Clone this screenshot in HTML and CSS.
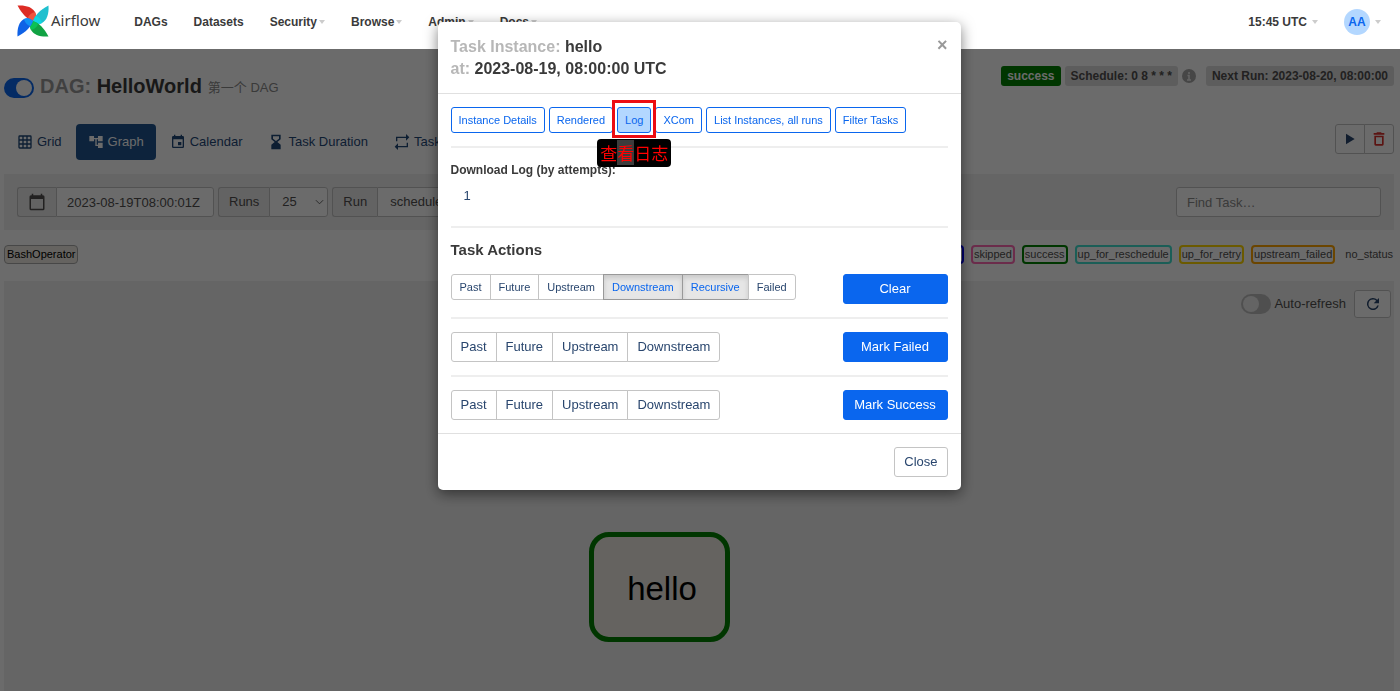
FILE: index.html
```
<!DOCTYPE html>
<html lang="en">
<head>
<meta charset="utf-8">
<title>HelloWorld - Graph - Airflow</title>
<link rel="stylesheet" href="styles.css">
</head>
<body>
<header class="navbar">
  <a class="brand" href="#">
    <svg class="brand-mark" viewBox="0 0 32 32" aria-hidden="true">
      <g>
        <path fill="#dd2c24" d="M0.500 0.500C9 0 15 2 18 7C20 11 18 14 16 16C10 14 5 9 0.500 0.500Z"/>
        <path fill="#f0553f" d="M16 16C18 14 20 11 18 7C14 8 11 11 11 13.500Z"/>
      </g>
      <g transform="rotate(90 16 16)">
        <path fill="#1fc0cf" d="M0.500 0.500C9 0 15 2 18 7C20 11 18 14 16 16C10 14 5 9 0.500 0.500Z"/>
        <path fill="#10d5e2" d="M16 16C18 14 20 11 18 7C14 8 11 11 11 13.500Z"/>
      </g>
      <g transform="rotate(180 16 16)">
        <path fill="#11a243" d="M0.500 0.500C9 0 15 2 18 7C20 11 18 14 16 16C10 14 5 9 0.500 0.500Z"/>
        <path fill="#0bc255" d="M16 16C18 14 20 11 18 7C14 8 11 11 11 13.500Z"/>
      </g>
      <g transform="rotate(270 16 16)">
        <path fill="#0f62e6" d="M0.500 0.500C9 0 15 2 18 7C20 11 18 14 16 16C10 14 5 9 0.500 0.500Z"/>
        <path fill="#1191f5" d="M16 16C18 14 20 11 18 7C14 8 11 11 11 13.500Z"/>
      </g>
    </svg>
    <span>Airflow</span>
  </a>
  <nav class="menu">
    <a href="#">DAGs</a>
    <a href="#">Datasets</a>
    <a class="has-caret" href="#">Security</a>
    <a class="has-caret" href="#">Browse</a>
    <a class="has-caret" href="#">Admin</a>
    <a class="has-caret" href="#">Docs</a>
  </nav>
  <div class="session">
    <a class="has-caret" href="#">15:45 UTC</a>
    <a class="has-caret" href="#"><span class="avatar">AA</span></a>
  </div>
</header>

<main class="page">
  <div class="dag-head">
    <label class="switch"><input type="checkbox" checked aria-label="Pause or unpause the DAG"></label>
    <h1><span class="muted">DAG:</span> HelloWorld</h1>
    <span class="description">第一个 DAG</span>
    <div class="tags">
      <a class="tag tag-success" href="#">success</a>
      <a class="tag" href="#">Schedule: 0 8 * * *</a>
      <svg class="info" viewBox="0 0 14 14" aria-hidden="true"><circle cx="7" cy="7" r="7"/><path d="M7 3v2M5.500 6.500H7V11M5 11h4"/></svg>
      <span class="tag">Next Run: 2023-08-20, 08:00:00</span>
    </div>
  </div>

  <div class="tabs-row">
    <nav class="tabs">
      <a href="#"><svg class="icon" viewBox="0 0 24 24"><path d="M20 2H4a2 2 0 0 0-2 2v16a2 2 0 0 0 2 2h16a2 2 0 0 0 2-2V4a2 2 0 0 0-2-2zM8 20H4v-4h4zm0-6H4v-4h4zm0-6H4V4h4zm6 12h-4v-4h4zm0-6h-4v-4h4zm0-6h-4V4h4zm6 12h-4v-4h4zm0-6h-4v-4h4zm0-6h-4V4h4z"/></svg>Grid</a>
      <a class="active" href="#"><svg class="icon" viewBox="0 0 24 24"><path d="M22 11V3h-7v3H9V3H2v8h7V8h2v10h4v3h7v-8h-7v3h-2V8h2v3z"/></svg>Graph</a>
      <a href="#"><svg class="icon" viewBox="0 0 24 24"><path d="M17 12h-5v5h5zM16 1v2H8V1H6v2H5a2 2 0 0 0-2 2v14a2 2 0 0 0 2 2h14a2 2 0 0 0 2-2V5a2 2 0 0 0-2-2h-1V1zm3 18H5V8h14z"/></svg>Calendar</a>
      <a href="#"><svg class="icon" viewBox="0 0 24 24"><path d="M5 1v7l5 4-5 4v7h14v-7l-5-4 5-4V1zm11.500 6L12 10.500 7.500 7V3.500h9z"/></svg>Task Duration</a>
      <a href="#"><svg class="icon" viewBox="0 0 24 24"><path d="M5 6h13v4l5-5-5-5v4H3v7h2zm14 12H6v-4l-5 5 5 5v-4h15v-7h-2z"/></svg>Task Tries</a>
    </nav>
    <div class="btn-group">
      <button class="btn btn-icon" aria-label="Trigger DAG"><svg class="icon" viewBox="0 0 24 24"><path d="M6 4v16l13-8z"/></svg></button>
      <button class="btn btn-icon danger" aria-label="Delete DAG"><svg class="icon" viewBox="0 0 24 24"><path d="M5 20a2 2 0 0 0 2 2h10a2 2 0 0 0 2-2V7H5zM7.500 9.500h9v10h-9zM16 3l-1-1H9L8 3H4v2.500h16V3z"/></svg></button>
    </div>
  </div>

  <form class="filters">
    <div class="group">
      <label for="base-date" aria-label="Base date"><svg class="icon icon-lg" viewBox="0 0 24 24"><path d="M20 3h-1V1h-2v2H7V1H5v2H4a2 2 0 0 0-2 2v16a2 2 0 0 0 2 2h16a2 2 0 0 0 2-2V5a2 2 0 0 0-2-2zm0 18H4V8h16z"/></svg></label>
      <input class="date" id="base-date" type="text" value="2023-08-19T08:00:01Z">
    </div>
    <div class="group">
      <label for="runs">Runs</label>
      <select class="runs" id="runs"><option>25</option></select>
    </div>
    <div class="group">
      <label for="run">Run</label>
      <select class="run" id="run"><option>scheduled__2023-08-18T08:00:00+00:00</option></select>
    </div>
    <input class="search" type="text" placeholder="Find Task…" aria-label="Find task">
  </form>

  <div class="legend">
    <span class="chip operator">BashOperator</span>
    <div class="states">
      <span class="chip shutdown">shutdown</span>
      <span class="chip skipped">skipped</span>
      <span class="chip success">success</span>
      <span class="chip reschedule">up_for_reschedule</span>
      <span class="chip retry">up_for_retry</span>
      <span class="chip upstream">upstream_failed</span>
      <span class="chip">no_status</span>
    </div>
  </div>

  <section class="graph">
    <div class="refresh">
      <label class="switch"><input type="checkbox">Auto-refresh</label>
      <button class="btn btn-icon" aria-label="Refresh"><svg class="icon icon-lg" viewBox="0 0 24 24"><path d="M17.650 6.350A8 8 0 1 0 19.730 14h-2.080A6 6 0 1 1 12 6c1.660 0 3.140.690 4.220 1.780L13 11h7V4z"/></svg></button>
    </div>
    <div class="node">hello</div>
  </section>
</main>

<div class="backdrop"></div>

<div class="modal-wrap">
  <div class="modal" role="dialog" aria-labelledby="modal-title">
    <div class="modal-head">
      <h2 id="modal-title"><span class="muted">Task Instance:</span> hello<br><span class="muted">at:</span> 2023-08-19, 08:00:00 UTC</h2>
      <button class="dismiss" aria-label="Close dialog">×</button>
    </div>
    <div class="modal-body">
      <div class="links">
        <a class="link-btn" href="#">Instance Details</a>
        <a class="link-btn" href="#">Rendered</a>
        <div class="marked">
          <a class="link-btn current" href="#">Log</a>
          <span class="marker"></span>
          <span class="note">查<span class="note-hl">看</span>日志</span>
        </div>
        <a class="link-btn" href="#">XCom</a>
        <a class="link-btn" href="#">List Instances, all runs</a>
        <a class="link-btn" href="#">Filter Tasks</a>
      </div>
      <hr>
      <h3>Download Log (by attempts):</h3>
      <a class="attempt" href="#">1</a>
      <hr>
      <h4>Task Actions</h4>
      <div class="action">
        <div class="btn-group small">
          <button class="btn">Past</button><button class="btn">Future</button><button class="btn">Upstream</button><button class="btn pressed" aria-pressed="true">Downstream</button><button class="btn pressed" aria-pressed="true">Recursive</button><button class="btn">Failed</button>
        </div>
        <button class="btn primary">Clear</button>
      </div>
      <hr>
      <div class="action">
        <div class="btn-group">
          <button class="btn">Past</button><button class="btn">Future</button><button class="btn">Upstream</button><button class="btn">Downstream</button>
        </div>
        <button class="btn primary">Mark Failed</button>
      </div>
      <hr>
      <div class="action">
        <div class="btn-group">
          <button class="btn">Past</button><button class="btn">Future</button><button class="btn">Upstream</button><button class="btn">Downstream</button>
        </div>
        <button class="btn primary">Mark Success</button>
      </div>
    </div>
    <div class="modal-foot"><button class="btn">Close</button></div>
  </div>
</div>
</body>
</html>
```

FILE: styles.css
```
* { box-sizing: border-box; }

body {
  margin: 0;
  min-height: 100vh;
  display: flex;
  flex-direction: column;
  background: #fff;
  color: #51504f;
  font: 13px/18px "Liberation Sans", "Noto Sans CJK SC", sans-serif;
  overflow: hidden;
}

a { color: inherit; text-decoration: none; }
button, input, select { font: inherit; color: inherit; }
h1, h2, h3, h4 { margin: 0; color: #3a3a3a; }
.muted { color: #b7b7b7; }

.icon { width: 16px; height: 16px; fill: currentColor; flex: none; }
.icon-lg { width: 18px; height: 18px; }

/* Navigation bar */
.navbar {
  position: relative;
  z-index: 2;
  display: flex;
  align-items: center;
  height: 49px;
  padding: 0 19px 5px 17px;
  background: #fff;
  color: #3a3a3a;
}
.brand { display: flex; align-items: center; gap: 2px; font: 15px/20px "Noto Sans", sans-serif; }
.brand-mark { width: 32px; height: 32px; margin-top: -3px; }
.brand span { padding-bottom: 4px; }
.menu { display: flex; gap: 26px; margin-left: 34px; font-size: 12px; font-weight: bold; }
.session { display: flex; align-items: center; gap: 26px; margin-left: auto; font-size: 12px; font-weight: bold; }
.has-caret { display: flex; align-items: center; gap: 2px; }
.session .has-caret { gap: 5px; }
.has-caret::after {
  content: "";
  border: 3px solid transparent;
  border-top: 4px solid #ccc;
  border-bottom: 0;
}
.avatar {
  display: grid;
  place-items: center;
  width: 26px;
  height: 26px;
  border-radius: 50%;
  background: #b3d7ff;
  color: #0a66ee;
}

/* Page */
.page { flex: 1; display: flex; flex-direction: column; padding: 0 6px 0 4px; }

.dag-head { display: flex; align-items: center; gap: 6px; padding-top: 24px; height: 53px; }
.dag-head h1 { padding-bottom: 3px; font-size: 20px; line-height: 26px; }
.dag-head h1 .muted { color: #999; }
.dag-head .description { color: #8a8a8a; }
.tags { display: flex; align-items: center; gap: 4px; margin-left: auto; align-self: flex-start; margin-top: -7px; }
.tag { padding: 1px 6px; border-radius: 3px; background: #dedede; font-weight: bold; font-size: 12px; }
.tag-success { background: #008000; color: #fff; }
.info { width: 14px; height: 14px; margin-right: 6px; fill: #a8a8a8; }
.info path { fill: none; stroke: #eee; stroke-width: 1.5; }

.switch { display: flex; align-items: center; gap: 3px; }
.switch input {
  appearance: none;
  width: 30px;
  height: 20px;
  margin: 0;
  padding: 2px;
  border-radius: 10px;
  background: #bdbdbd;
}
.switch input::before {
  content: "";
  display: block;
  width: 16px;
  height: 16px;
  border-radius: 50%;
  background: #eee;
}
.switch input:checked { background: #0a66ee; }
.switch input:checked::before { margin-left: auto; background: #fff; }

.tabs-row { display: flex; justify-content: space-between; align-items: flex-start; margin-top: 22px; }
.tabs { display: flex; gap: 2px; padding-left: 1px; color: #1f4878; }
.tabs a { display: flex; align-items: center; gap: 4px; height: 36px; padding: 0 12px; border-radius: 4px; }
.tabs .active { background: #1f5590; color: #fff; }

.btn {
  height: 30px;
  padding: 0 9px;
  border: 1px solid #c4c4c4;
  border-radius: 3px;
  background: #fff;
  color: #29466e;
}
.btn-icon { display: grid; place-items: center; padding: 0 6px; }
.btn-icon.danger { color: #d9302c; }
.btn-group { display: flex; }
.btn-group .btn + .btn { margin-left: -1px; border-top-left-radius: 0; border-bottom-left-radius: 0; }
.btn-group .btn:not(:last-child) { border-top-right-radius: 0; border-bottom-right-radius: 0; }
.btn-group.small .btn { height: 26px; padding: 0 8px; font-size: 11px; }
.btn-group .pressed { border-color: #999; background: #e6e6e6; box-shadow: inset 0 3px 5px rgba(0, 0, 0, .125); color: #0a66ee; }

.filters { display: flex; gap: 4px; margin-top: 14px; padding: 13px; background: #f0f0f0; }
.group { display: flex; }
.group label {
  display: grid;
  place-items: center;
  padding: 0 10px;
  border: 1px solid #c4c4c4;
  border-right: 0;
  border-radius: 3px 0 0 3px;
  background: #ebebeb;
}
.filters input, .filters select {
  height: 30px;
  padding: 0 10px;
  border: 1px solid #c4c4c4;
  border-radius: 3px;
  background: #fff;
}
.filters .group input, .filters .group select { border-radius: 0 3px 3px 0; }
.filters select {
  appearance: none;
  padding: 0 12px;
  background: #fff url("data:image/svg+xml,%3Csvg xmlns='http://www.w3.org/2000/svg' viewBox='0 0 10 6'%3E%3Cpath d='M1 1l4 4 4-4' fill='none' stroke='%23555'/%3E%3C/svg%3E") no-repeat right 3px center / 9px 6px;
}
.date { width: 158px; }
.runs { width: 59px; }
.run { width: 240px; }
.filters .search { width: 205px; margin-left: auto; }
.search::placeholder { color: #8a8a8a; }

.legend { display: flex; justify-content: space-between; align-items: center; margin-top: 15px; padding-right: 1px; }
.states { display: flex; gap: 7px; }
.chip { padding: 1px; border: 2px solid transparent; border-radius: 4px; font-size: 11px; line-height: 13px; }
.operator { border: 1px solid #aaa; padding: 2px; background: #f0ede4; color: #000; }
.shutdown { border-color: blue; }
.skipped { border-color: hotpink; }
.success { border-color: green; }
.reschedule { border-color: turquoise; }
.retry { border-color: gold; }
.upstream { border-color: orange; }
.chip:last-child { padding-right: 0; border-right: 0; }

.graph { flex: 1; display: flex; flex-direction: column; align-items: center; margin-top: 17px; padding: 9px 3px; background: #f0f0f0; }
.refresh { display: flex; align-items: center; gap: 8px; align-self: flex-end; }
.refresh .btn { width: 37px; height: 28px; }
.node {
  display: grid;
  place-items: center;
  width: 141px;
  height: 110px;
  margin: 214px 80px 0 0;
  padding: 4px 0 0 6px;
  border: 5px solid #008000;
  border-radius: 20px;
  background: #f0ede4;
  color: #000;
  font-size: 33px;
  line-height: 40px;
}

/* Dialog */
.backdrop { position: fixed; inset: 49px 0 0; background: rgba(0, 0, 0, .58); }
.modal-wrap { position: fixed; inset: 0; z-index: 3; display: flex; justify-content: center; align-items: flex-start; padding: 22px 2px 0 0; }
.modal { width: 523px; border-radius: 5px; background: #fff; box-shadow: 0 4px 14px rgba(0, 0, 0, .5); }
.modal-head { display: flex; justify-content: space-between; align-items: flex-start; padding: 14px 13px 13px; border-bottom: 1px solid #e0e0e0; }
.modal-head h2 { font-size: 16px; line-height: 22px; }
.dismiss { padding: 0; border: 0; background: none; color: #999; font-size: 18px; line-height: 18px; font-weight: bold; }
.modal-body { padding: 13px; }
.modal-body hr { height: 2px; margin: 13px 0; border: 0; background: #eee; }
.modal-body h3 { font-size: 12px; line-height: 18px; }
.modal-body h4 { margin-bottom: 15px; font-size: 15px; line-height: 18px; }
.links { display: flex; gap: 4px; }
.link-btn { display: block; padding: 4px 7px; border: 1px solid #0a66ee; border-radius: 3px; color: #0a66ee; font-size: 11px; line-height: 16px; }
.link-btn.current { background: #b3d7ff; }
.marked { position: relative; }
.marker { position: absolute; inset: -7px -5px -5px; border: 3px solid #ed0c12; }
.note {
  position: absolute;
  top: 32px;
  left: 50%;
  z-index: 1;
  transform: translateX(-50%);
  padding: 2px 3px;
  border-radius: 4px;
  background: #000;
  color: #f00;
  font: 17px/24px "Noto Sans CJK SC", sans-serif;
  white-space: nowrap;
}
.note-hl { background: #3c3c3c; }
.attempt { display: block; width: max-content; padding: 8px 13px; line-height: 18px; color: #29466e; }
.action { display: flex; justify-content: space-between; align-items: flex-start; }
.primary { width: 105px; padding: 0; border-color: #0a66ee; background: #0a66ee; color: #fff; }
.modal-foot { display: flex; justify-content: flex-end; padding: 13px; border-top: 1px solid #e0e0e0; }
```
